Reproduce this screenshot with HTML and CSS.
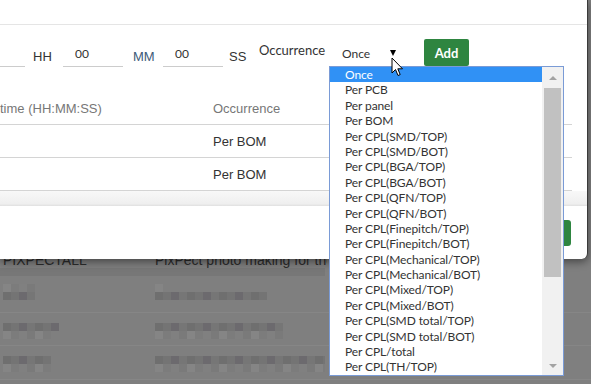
FILE: index.html
```html
<!DOCTYPE html>
<html lang="en">
  <head>
    <meta charset="UTF-8" />
    <meta name="viewport" content="width=device-width, initial-scale=1.0" />
    <title>Process time</title>
    <link rel="stylesheet" href="styles.css">
  </head>
  <body>
    <!-- page behind the dialog (dimmed) -->
    <div class="page">
      <div class="bg-head">
        <span class="bg-c1">PIXPECTALL</span>
        <span class="bg-c2">PixPect photo making for the requirement</span>
      </div>
      <div class="bg-band"></div>
      <div class="bg-row bg-row1">
        <div class="bg-c1"><i class="blur lt w32"></i><i class="blur dk w32"></i></div>
        <div class="bg-c2"><i class="blur lt w8"></i><i class="blur dk w112"></i></div>
      </div>
      <div class="bg-row bg-row2">
        <div class="bg-c1"><i class="blur dk w56"></i><i class="blur lt w48"></i></div>
        <div class="bg-c2"><i class="blur dk w128"></i><i class="blur lt w128"></i></div>
      </div>
      <div class="bg-row bg-row3">
        <div class="bg-c1"><i class="blur dk w48"></i><i class="blur lt w48"></i></div>
        <div class="bg-c2"><i class="blur dk w170"></i><i class="blur lt w170"></i></div>
      </div>
    </div>

    <div class="modal">
      <div class="modal-head"></div>

      <div class="form-row">
        <div class="time-input first"></div>
        <span class="unit unit-hh">HH</span>
        <div class="time-input">00</div>
        <span class="unit unit-mm">MM</span>
        <div class="time-input sec">00</div>
        <span class="unit unit-ss">SS</span>
        <span class="occ-label">Occurrence</span>
        <div class="occ-select">Once<span class="caret"></span></div>
        <button class="btn-add">Add</button>
      </div>

      <div class="tbl">
        <div class="tr th">
          <span class="c1">time (HH:MM:SS)</span>
          <span class="c2">Occurrence</span>
        </div>
        <div class="tr">
          <span class="c1"></span>
          <span class="c2">Per BOM</span>
        </div>
        <div class="tr">
          <span class="c1"></span>
          <span class="c2">Per BOM</span>
        </div>
      </div>
      <div class="scroll-band"></div>

      <div class="modal-foot">
        <button class="btn-save">Save</button>
      </div>
    </div>

    <div class="listbox">
      <ul class="options">
        <li class="selected">Once</li>
        <li>Per PCB</li>
        <li>Per panel</li>
        <li>Per BOM</li>
        <li>Per CPL(SMD/TOP)</li>
        <li>Per CPL(SMD/BOT)</li>
        <li>Per CPL(BGA/TOP)</li>
        <li>Per CPL(BGA/BOT)</li>
        <li>Per CPL(QFN/TOP)</li>
        <li>Per CPL(QFN/BOT)</li>
        <li>Per CPL(Finepitch/TOP)</li>
        <li>Per CPL(Finepitch/BOT)</li>
        <li>Per CPL(Mechanical/TOP)</li>
        <li>Per CPL(Mechanical/BOT)</li>
        <li>Per CPL(Mixed/TOP)</li>
        <li>Per CPL(Mixed/BOT)</li>
        <li>Per CPL(SMD total/TOP)</li>
        <li>Per CPL(SMD total/BOT)</li>
        <li>Per CPL/total</li>
        <li>Per CPL(TH/TOP)</li>
      </ul>
      <div class="sbar">
        <div class="sbar-btn"><span class="tri-up"></span></div>
        <div class="sbar-thumb"></div>
        <div class="sbar-btn end"><span class="tri-down"></span></div>
      </div>
    </div>

    <svg class="cursor" width="14" height="21" viewBox="0 0 14 21">
      <path d="M1 1 L1 16 L4.5 12.5 L7 18.5 L9.2 17.6 L6.8 11.8 L11.5 11.8 Z" fill="#fff" stroke="#000" stroke-width="1" stroke-linejoin="miter"/>
    </svg>
  </body>
</html>
```

FILE: styles.css
```css
html,
body {
  margin: 0;
  padding: 0;
}
body {
  width: 591px;
  height: 384px;
  overflow: hidden;
  position: relative;
  background-color: #7f7f7f;
  font-family: "Liberation Sans", Arial, sans-serif;
}

/* dimmed page */
.page {
  padding-top: 252px;
}
.bg-head {
  display: flex;
  height: 16px;
  line-height: 16px;
  font-size: 14px;
  color: #2c2c2c;
}
.bg-c1 {
  width: 152px;
  padding-left: 3px;
  flex: none;
}
.bg-c2 {
  white-space: nowrap;
}
.bg-head .bg-c2 {
  width: 172px;
  overflow: hidden;
}
.bg-band {
  height: 8px;
  width: 325px;
  background-color: #777;
}
.bg-row {
  display: flex;
  box-sizing: border-box;
  border-bottom: 1px solid #868686;
}
.bg-row .bg-c1,
.bg-row .bg-c2 {
  display: flex;
  flex-direction: column;
}
.bg-row1 {
  height: 37px;
  padding-top: 8px;
}
.bg-row2 {
  height: 33px;
  padding-top: 10px;
}
.bg-row3 {
  height: 34px;
  padding-top: 10px;
}
.blur {
  display: block;
  height: 8px;
}
.blur.dk {
  background: repeating-linear-gradient(90deg, #6f6f6f 0 8px, #747474 8px 16px, #6c6a6e 16px 24px, #767676 24px 32px);
}
.blur.lt {
  background: repeating-linear-gradient(90deg, #858585 0 8px, #7c7c7c 8px 16px, #808080 16px 24px, #7a7a7a 24px 32px);
}
.w8 { width: 8px; }
.w32 { width: 32px; }
.w48 { width: 48px; }
.w56 { width: 56px; }
.w112 { width: 112px; }
.w128 { width: 128px; }
.w170 { width: 170px; }

/* dialog */
.modal {
  position: absolute;
  top: 0;
  left: 0;
  width: 587px;
  height: 259px;
  background-color: #fff;
  border-right: 1px solid #3a3a3a;
  border-bottom-right-radius: 6px;
  box-shadow: 0 3px 8px rgba(0, 0, 0, 0.45);
}
.modal-head {
  height: 24px;
  border-bottom: 1px solid #e5e5e5;
}
.form-row {
  display: flex;
  height: 42px;
}
.time-input {
  flex: none;
  box-sizing: border-box;
  width: 60px;
  height: 42px;
  margin-left: 11px;
  padding: 21px 0 0 12px;
  border-bottom: 1px solid #ccc;
  font-family: Lato, "Open Sans", sans-serif;
  font-size: 12px;
  line-height: 15px;
  color: #333;
}
.time-input.first {
  width: 25px;
  margin-left: 0;
}
.time-input.sec {
  margin-left: 8px;
}
.unit {
  flex: none;
  margin-top: 24px;
  font-size: 13px;
  line-height: 15px;
  color: #333;
  white-space: nowrap;
}
.unit-hh {
  width: 19px;
  margin-left: 8px;
}
.unit-mm {
  width: 22px;
  margin-left: 10px;
  color: #3d5a78;
}
.unit-ss {
  width: 18px;
  margin-left: 6px;
}
.occ-label {
  flex: none;
  width: 68px;
  margin: 18px 0 0 12px;
  font-family: Lato, "Open Sans", sans-serif;
  font-size: 13px;
  line-height: 15px;
  color: #333;
  white-space: nowrap;
}
.occ-select {
  flex: none;
  position: relative;
  box-sizing: border-box;
  width: 77px;
  height: 42px;
  margin-left: 2px;
  padding: 21px 0 0 13px;
  border-bottom: 1px solid #a9a9a9;
  font-family: Lato, "Open Sans", sans-serif;
  font-size: 12px;
  line-height: 15px;
  color: #333;
}
.caret {
  position: absolute;
  left: 61px;
  top: 25px;
  width: 0;
  height: 0;
  border-left: 3.5px solid transparent;
  border-right: 3.5px solid transparent;
  border-top: 6px solid #000;
}
.btn-add {
  flex: none;
  margin: 14px 0 0 18px;
  width: 45px;
  height: 27px;
  border: none;
  border-radius: 2px;
  background-color: #2e8540;
  color: #fff;
  font-family: Lato, "Open Sans", sans-serif;
  font-size: 13px;
  font-weight: bold;
  padding: 0;
}

.tbl {
  margin-right: 15px;
}
.tr {
  display: flex;
  align-items: center;
  box-sizing: border-box;
  height: 33px;
  border-bottom: 1px solid #d4d4d4;
  font-size: 13px;
  line-height: 15px;
  color: #333;
}
.tr.th {
  height: 58px;
  align-items: flex-end;
  padding-bottom: 8px;
  color: #777;
}
.c1 {
  width: 213px;
  flex: none;
}
.scroll-band {
  height: 15px;
  background: linear-gradient(#f8f8f8, #efefef 85%, #e0e0e0);
}
.modal-foot {
  display: flex;
  justify-content: flex-end;
  padding: 14px 16px 0 0;
}
.btn-save {
  width: 60px;
  height: 26px;
  border: none;
  border-radius: 3px;
  background-color: #2e8540;
  color: #fff;
  font-size: 13px;
}

/* open dropdown list */
.listbox {
  position: absolute;
  left: 329px;
  top: 66px;
  display: flex;
  width: 233px;
  height: 308px;
  border: 1px solid #7a9bd6;
  background-color: #fff;
}
.options {
  flex: 1;
  margin: 0;
  padding: 0;
  list-style: none;
  font-family: Lato, "Open Sans", sans-serif;
  font-size: 12px;
  letter-spacing: -0.1px;
  color: #333;
}
.options li {
  height: 15.4px;
  line-height: 15.4px;
  padding-left: 15px;
  white-space: nowrap;
}
.options li.selected {
  background-color: #3091f5;
  color: #fff;
}
.sbar {
  display: flex;
  flex-direction: column;
  width: 21px;
  background-color: #f1f1f1;
}
.sbar-btn {
  display: flex;
  justify-content: center;
  align-items: center;
  height: 21px;
}
.sbar-btn.end {
  margin-top: auto;
  height: 19px;
}
.sbar-thumb {
  height: 189px;
  margin: 0 2px;
  background-color: #c1c1c1;
}
.tri-up,
.tri-down {
  width: 0;
  height: 0;
  border-left: 4px solid transparent;
  border-right: 4px solid transparent;
}
.tri-up {
  border-bottom: 4px solid #a3a3a3;
}
.tri-down {
  border-top: 4px solid #a3a3a3;
}

.cursor {
  position: absolute;
  left: 391px;
  top: 57px;
}
```
